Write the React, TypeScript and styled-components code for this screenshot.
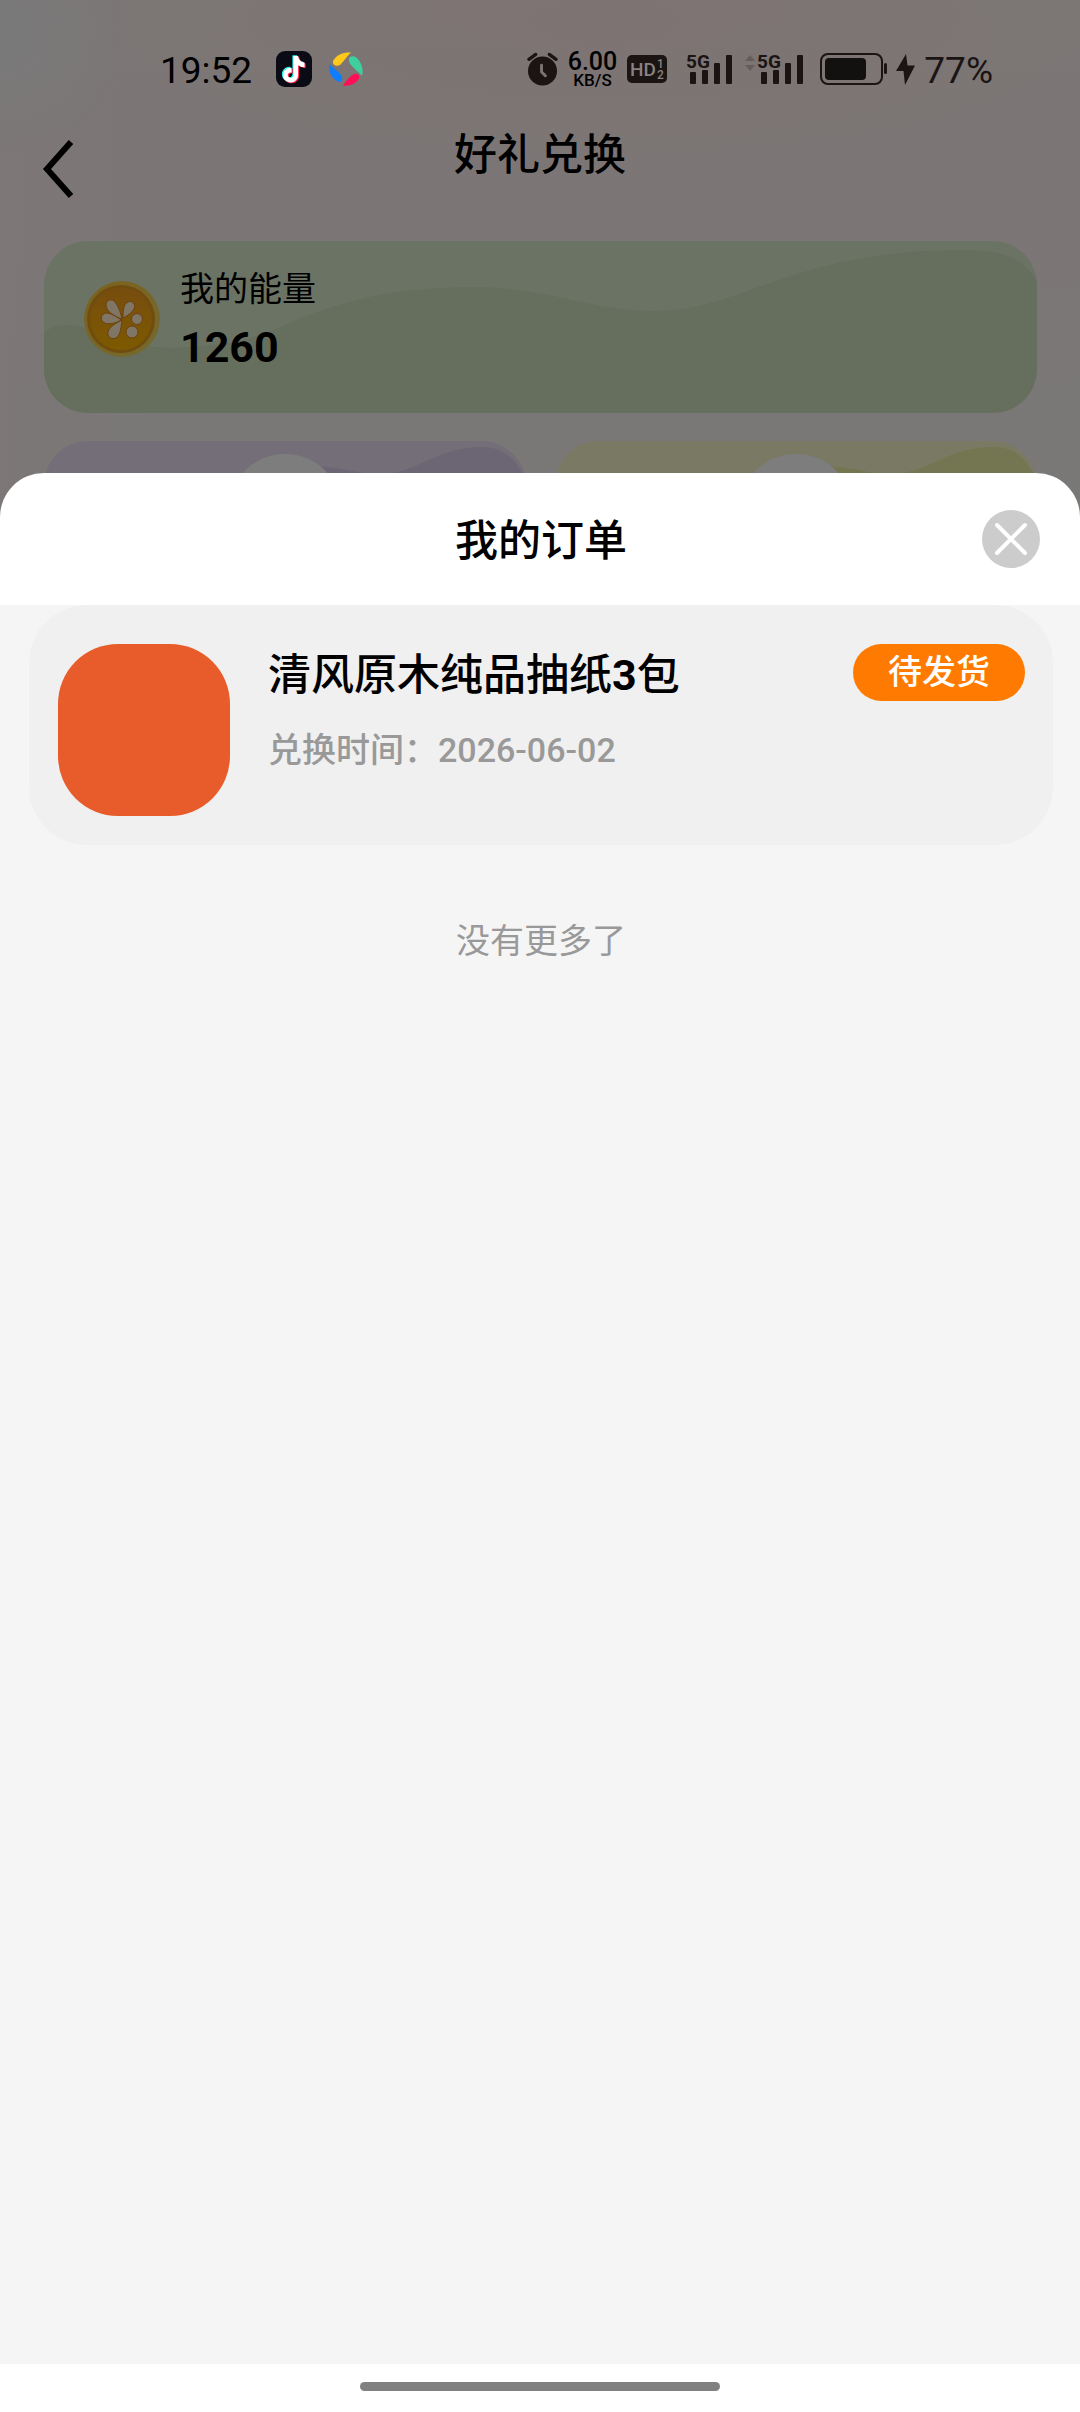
import React from "react";
import styled, { createGlobalStyle } from "styled-components";

const GlobalStyle = createGlobalStyle`
  *, *::before, *::after { box-sizing: border-box; }
  html, body, #root { height: 100%; }
  body {
    margin: 0;
    color: #000;
    font-family: Roboto, "Noto Sans CJK SC", sans-serif;
  }
  h1, h2, h3, p, ul { margin: 0; padding: 0; font-weight: inherit; }
  button { border: 0; padding: 0; background: none; font: inherit; cursor: pointer; }
  svg { display: block; overflow: visible; }
`;

const Screen = styled.div`
  position: relative;
  min-height: 100%;
  overflow: hidden;
  background:
    radial-gradient(circle at 0 30px, rgba(240, 246, 246, 0.7) 0, rgba(240, 246, 246, 0) 130px),
    radial-gradient(ellipse 520px 150px at 56% 20px, rgba(255, 222, 220, 0.45), rgba(255, 222, 220, 0)),
    linear-gradient(90deg, #faeeee 0, rgba(250, 238, 238, 0) 14%) no-repeat,
    linear-gradient(180deg, #f8eeec 0, #f7edeb 240px, #f4f0ef 440px, #f2f2f0 520px);
`;

/* ---------- status bar ---------- */

const StatusBar = styled.header`
  position: relative;
  z-index: 2;
  display: flex;
  align-items: center;
  justify-content: space-between;
  height: 92px;
  padding: 46px 87px 0 160px;
`;

const StatusGroup = styled.div<{ $gap: number }>`
  display: flex;
  align-items: center;
  gap: ${(p) => p.$gap}px;
`;

const Clock = styled.time`
  padding-top: 3px;
  margin-right: 7px;
  font-size: 37px;
  line-height: 46px;
`;

const NetSpeed = styled.div`
  display: flex;
  flex-direction: column;
  align-items: center;
  padding-top: 2px;
  font-weight: 500;
`;

const SpeedValue = styled.span`
  font-size: 25px;
  line-height: 20px;
`;

const SpeedUnit = styled.span`
  font-size: 17px;
  line-height: 16px;
`;

const BatteryLevel = styled.span`
  padding-top: 3px;
  font-size: 37px;
  line-height: 46px;
  color: #1a1413;
`;

/* ---------- page behind the sheet ---------- */

const NavBar = styled.div`
  display: grid;
  grid-template-columns: 120px 1fr 120px;
  align-items: center;
  height: 149px;
`;

const BackButton = styled.button`
  justify-self: start;
  padding: 4px 40px 0 43px;
`;

const PageTitle = styled.h1`
  padding-bottom: 24px;
  font-size: 43px;
  line-height: 56px;
  font-weight: 500;
  text-align: center;
`;

const PageBody = styled.main`
  display: flex;
  flex-direction: column;
  gap: 28px;
  padding: 0 43px 0 44px;
`;

const EnergyCard = styled.section`
  position: relative;
  display: flex;
  align-items: flex-start;
  gap: 20px;
  height: 172px;
  padding: 24px 40px;
  border-radius: 44px;
  overflow: hidden;
  background: #d7e6cb;
`;

const Wave = styled.svg`
  position: absolute;
  inset: 0;
  width: 100%;
  height: 100%;
`;

const CoinBox = styled.div`
  position: relative;
  padding-top: 16px;
`;

const EnergyText = styled.div`
  position: relative;
`;

const EnergyLabel = styled.p`
  font-size: 34px;
  line-height: 48px;
`;

const EnergyValue = styled.p`
  margin-top: 6px;
  font-size: 43px;
  line-height: 56px;
  font-weight: 700;
`;

const GiftGrid = styled.div`
  display: grid;
  grid-template-columns: 1fr 1fr;
  gap: 29px;
`;

const GiftCard = styled.section<{ $tone: string }>`
  position: relative;
  display: flex;
  justify-content: center;
  height: 240px;
  padding-top: 13px;
  border-radius: 44px;
  overflow: hidden;
  background: ${(p) => p.$tone};
`;

const GiftDisc = styled.div`
  position: relative;
  width: 114px;
  height: 114px;
  border-radius: 50%;
  background: #fbfbfb;
`;

/* ---------- order sheet ---------- */

const Backdrop = styled.div`
  position: absolute;
  inset: 0;
  z-index: 1;
  display: flex;
  flex-direction: column;
  padding-top: 473px;
  background: rgba(0, 0, 0, 0.5);
`;

const Sheet = styled.section`
  flex: 1;
  display: flex;
  flex-direction: column;
  border-radius: 44px 44px 0 0;
  overflow: hidden;
  background: #fff;
`;

const SheetHeader = styled.div`
  display: grid;
  grid-template-columns: 58px 1fr 58px;
  align-items: center;
  height: 132px;
  padding: 0 40px;
`;

const SheetTitle = styled.h2`
  grid-column: 2;
  padding: 4px 0 0 2px;
  font-size: 43px;
  line-height: 56px;
  font-weight: 500;
  text-align: center;
`;

const CloseButton = styled.button`
  width: 58px;
  height: 58px;
`;

const OrderList = styled.ul`
  flex: 1;
  padding: 0 27px 0 29px;
  list-style: none;
  background: #f5f5f5;
`;

const OrderCard = styled.li`
  display: flex;
  align-items: flex-start;
  height: 240px;
  padding: 39px 28px 29px 29px;
  border-radius: 58px;
  background: #f0f0f0;
`;

const Thumb = styled.div`
  flex: none;
  width: 172px;
  height: 172px;
  border-radius: 60px;
  background: #e85b2a;
`;

const OrderInfo = styled.div`
  flex: 1;
  min-width: 0;
  padding-left: 38px;
  font-weight: 500;
`;

const OrderName = styled.h3`
  font-size: 43px;
  line-height: 62px;
`;

const Count = styled.span`
  font-weight: 700;
`;

const OrderTime = styled.p`
  margin-top: 20px;
  font-size: 34px;
  line-height: 48px;
  color: #999;
`;

const StatusBadge = styled.span`
  flex: none;
  width: 172px;
  border-radius: 29px;
  background: #ff7a00;
  color: #fff;
  font-size: 34px;
  line-height: 57px;
  font-weight: 500;
  text-align: center;
`;

const EndNote = styled.li`
  padding-top: 72px;
  font-size: 34px;
  line-height: 48px;
  color: #999;
  text-align: center;
`;

const HomeArea = styled.footer`
  display: flex;
  justify-content: center;
  height: 48px;
  padding-top: 18px;
`;

const HomeIndicator = styled.div`
  width: 33.33%;
  height: 9px;
  border-radius: 5px;
  background: #808080;
`;

/* ---------- drawings ---------- */

const INK = "#1a1413";

const DouyinIcon = () => {
  const note =
    "M17 5h4.6c.4 3.700 2.800 6.200 6.400 6.600v4.700c-2.400 0-4.600-.8-6.400-2v9.500c0 4.600-3.400 7.700-7.500 7.700-4.300 0-7.600-3.300-7.600-7.400 0-4.500 3.800-7.900 8.600-7.400v4.800c-2.200-.5-3.900.8-3.900 2.600 0 1.600 1.300 2.800 2.900 2.800 1.700 0 2.900-1.200 2.900-3.200z";
  return (
    <svg width="36" height="36" viewBox="0 0 36 36">
      <rect width="36" height="36" rx="9" fill="#0b0b15" />
      <path d={note} fill="#25f4ee" transform="translate(-.6 -.8)" />
      <path d={note} fill="#fe2c55" transform="translate(1.600 .8)" />
      <path d={note} fill="#fff" transform="translate(.5 0)" />
    </svg>
  );
};

const SwirlIcon = () => (
  <svg width="34" height="34" viewBox="0 0 34 34">
    <path d="M4 9C8 2 15 0 22 0.500 19 3 15 9 11 13 8 15 3 13 4 9z" fill="#ffc81a" />
    <path d="M21 5C25 3 29 6 31.500 11 34 16 34 20 33 24 30 20 25 17 22 13 20 10 19 7 21 5z" fill="#3fcf9f" />
    <path d="M14 33.500C17 29 21 24 25 22 29 21 32 24 29 28 26 32 20 34.500 14 33.500z" fill="#ff0f55" />
    <path d="M0.500 12C3 15 9 19 12 23 14 27 13 31 9 29.500 2 26 -1 19 0.500 12z" fill="#0f7dff" />
  </svg>
);

const AlarmIcon = () => (
  <svg width="31" height="34" viewBox="0 0 32 34">
    <circle cx="16" cy="19" r="15" fill={INK} />
    <path d="M2 7l7-5M30 7l-7-5" stroke={INK} strokeWidth="3.500" strokeLinecap="round" />
    <path d="M15 13v7l4 4" fill="none" stroke="#7d7573" strokeWidth="3" strokeLinecap="round" strokeLinejoin="round" />
  </svg>
);

const HdIcon = () => (
  <svg width="40" height="28" viewBox="0 0 40 28">
    <rect width="40" height="28" rx="5" fill={INK} />
    <g fill="#8a8280" fontFamily="Roboto, sans-serif" fontWeight="500">
      <text x="3" y="21" fontSize="19">HD</text>
      <text x="30" y="13" fontSize="12">1</text>
      <text x="30" y="24" fontSize="12">2</text>
    </g>
  </svg>
);

const SignalIcon = ({ arrows = false }: { arrows?: boolean }) => (
  <svg width={arrows ? 65 : 58} height="40" viewBox={arrows ? "-12 -3 65 40" : "-9 -3 58 40"}>
    {arrows && <path d="M-12 9l5-6 5 6zM-12 13l5 6 5-6z" fill="#655d5b" />}
    <text x="0" y="16" fontSize="19" fontWeight="700" fontFamily="Roboto, sans-serif" fill={INK}>5G</text>
    <g fill={INK}>
      <rect x="4" y="20" width="6" height="12" rx="1" />
      <rect x="16" y="18" width="6" height="14" rx="1" />
      <rect x="28" y="11" width="6" height="21" rx="1" />
      <rect x="40" y="3" width="6" height="29" rx="1" />
    </g>
  </svg>
);

const BatteryIcon = () => (
  <svg width="67" height="32" viewBox="0 0 67 32">
    <rect x="1" y="1" width="61" height="30" rx="7" fill="none" stroke={INK} strokeWidth="2" />
    <rect x="5" y="5" width="41" height="22" rx="4" fill="#131010" />
    <rect x="64" y="10" width="3" height="11" rx="1.500" fill={INK} />
  </svg>
);

const BoltIcon = () => (
  <svg width="17" height="31" viewBox="1 0 17 31">
    <path d="M10 0L0 17h7.500L9 31 19 11.500h-7.500z" fill={INK} />
  </svg>
);

const BackIcon = () => (
  <svg width="30" height="58" viewBox="0 0 30 58">
    <path d="M28 2L4 29l24 27" fill="none" stroke="#000" strokeWidth="6" />
  </svg>
);

const CoinIcon = () => (
  <svg width="76" height="76" viewBox="0 0 76 76">
    <defs>
      <linearGradient id="coinRim" x1="0" y1="0" x2="1" y2="1">
        <stop offset="0" stopColor="#f8c43a" />
        <stop offset="1" stopColor="#e8d462" />
      </linearGradient>
      <linearGradient id="coinFace" x1="0" y1="0" x2="0" y2="1">
        <stop offset="0" stopColor="#f09a1e" />
        <stop offset="1" stopColor="#fab400" />
      </linearGradient>
    </defs>
    <circle cx="38" cy="38" r="38" fill="url(#coinRim)" />
    <circle cx="37" cy="38" r="34" fill="#e09a1c" />
    <circle cx="37" cy="38" r="31" fill="url(#coinFace)" />
    <g fill="#ffeccb" stroke="#dc8018" strokeWidth="1">
      <path d="M38 38C32 36 22 31 22 24c0-5 6-7 9-3 4 5 6 12 7 17z" />
      <path d="M39 37c0-5 0-14 5-16 4-2 8 2 6 7-2 4-7 7-11 9z" />
      <path d="M37 39c-6 4-14 5-18 2-3-3-2-8 3-9 5 0 11 4 15 7z" />
      <path d="M38 39c-1 6-1 15-6 18-4 2-9-1-8-6 1-5 8-9 14-12z" />
      <circle cx="53" cy="38" r="5.500" />
      <circle cx="48" cy="51" r="6" />
    </g>
  </svg>
);

const CloseIcon = () => (
  <svg width="58" height="58" viewBox="0 0 58 58">
    <circle cx="29" cy="29" r="29" fill="#ccc" />
    <path d="M15 15l28 28M43 15L15 43" stroke="#fff" strokeWidth="4" strokeLinecap="round" />
  </svg>
);

const EnergyWave = () => (
  <Wave viewBox="0 0 993 172" preserveAspectRatio="none">
    <path
      d="M0 92C8 84 22 82 40 86C75 98 100 110 145 106C190 104 215 96 252 79C310 55 365 46 431 46C500 46 550 70 610 70C700 70 745 9 920 9C960 9 980 18 993 40V172H0z"
      fill="#cddcbc"
    />
  </Wave>
);

const GiftWave = ({ color }: { color: string }) => (
  <Wave viewBox="0 0 482 240" preserveAspectRatio="none">
    <path d="M0 90C120 90 180 36 240 24C300 24 310 33 335 33C375 33 390 6 438 6C460 6 472 18 482 40V240H0z" fill={color} />
  </Wave>
);

/* ---------- data ---------- */

const orders = [
  { id: 1, name: "清风原木纯品抽纸", count: 3, unit: "包", date: "2026-06-02", status: "待发货" },
];

const gifts = [
  { id: "purple", tone: "#e7dcef", wave: "#d9cde8" },
  { id: "yellow", tone: "#f5f3c6", wave: "#e8eaa2" },
];

export default function App() {
  return (
    <>
      <GlobalStyle />
      <Screen>
        <StatusBar>
          <StatusGroup $gap={17}>
            <Clock>19:52</Clock>
            <DouyinIcon />
            <SwirlIcon />
          </StatusGroup>
          <StatusGroup $gap={10}>
            <AlarmIcon />
            <NetSpeed>
              <SpeedValue>6.00</SpeedValue>
              <SpeedUnit>KB/S</SpeedUnit>
            </NetSpeed>
            <HdIcon />
            <SignalIcon />
            <SignalIcon arrows />
            <BatteryIcon />
            <BoltIcon />
            <BatteryLevel>77%</BatteryLevel>
          </StatusGroup>
        </StatusBar>

        <NavBar>
          <BackButton aria-label="返回">
            <BackIcon />
          </BackButton>
          <PageTitle>好礼兑换</PageTitle>
        </NavBar>

        <PageBody>
          <EnergyCard>
            <EnergyWave />
            <CoinBox>
              <CoinIcon />
            </CoinBox>
            <EnergyText>
              <EnergyLabel>我的能量</EnergyLabel>
              <EnergyValue>1260</EnergyValue>
            </EnergyText>
          </EnergyCard>
          <GiftGrid>
            {gifts.map((g) => (
              <GiftCard key={g.id} $tone={g.tone}>
                <GiftWave color={g.wave} />
                <GiftDisc />
              </GiftCard>
            ))}
          </GiftGrid>
        </PageBody>

        <Backdrop>
          <Sheet role="dialog" aria-labelledby="sheet-title">
            <SheetHeader>
              <SheetTitle id="sheet-title">我的订单</SheetTitle>
              <CloseButton aria-label="关闭">
                <CloseIcon />
              </CloseButton>
            </SheetHeader>
            <OrderList>
              {orders.map((o) => (
                <OrderCard key={o.id}>
                  <Thumb />
                  <OrderInfo>
                    <OrderName>
                      {o.name}
                      <Count>{o.count}</Count>
                      {o.unit}
                    </OrderName>
                    <OrderTime>兑换时间：{o.date}</OrderTime>
                  </OrderInfo>
                  <StatusBadge>{o.status}</StatusBadge>
                </OrderCard>
              ))}
              <EndNote>没有更多了</EndNote>
            </OrderList>
            <HomeArea>
              <HomeIndicator />
            </HomeArea>
          </Sheet>
        </Backdrop>
      </Screen>
    </>
  );
}
